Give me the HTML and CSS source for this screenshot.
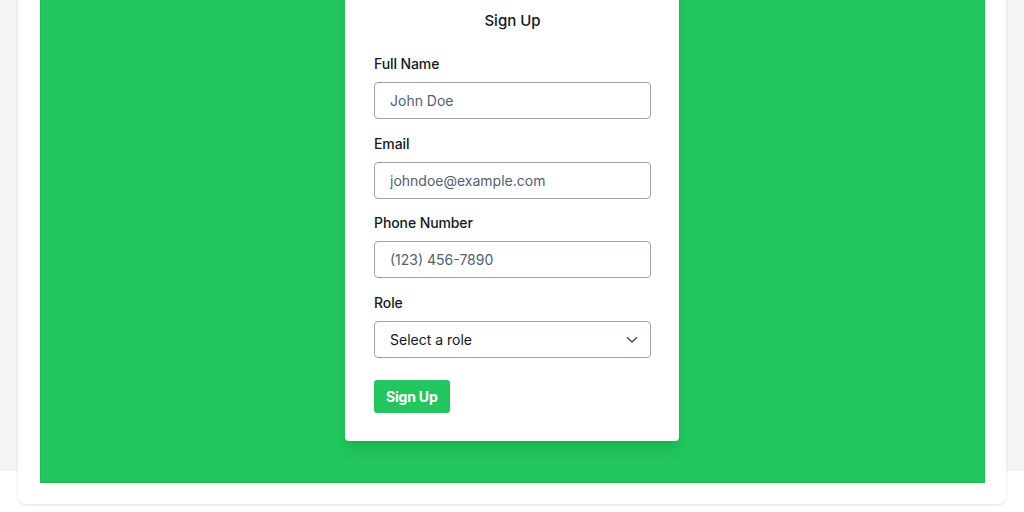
FILE: index.html
```html
<!DOCTYPE html>
<html lang="en">
<head>
  <meta charset="UTF-8" />
  <title>Sign Up</title>
  <link rel="stylesheet" href="styles.css">
</head>
<body>
  <div class="page">
    <div class="frame">
      <div class="hero">
        <form class="signup">
          <h2>Sign Up</h2>
          <div class="field">
            <label for="fullName">Full Name</label>
            <input type="text" id="fullName" placeholder="John Doe" />
          </div>
          <div class="field">
            <label for="email">Email</label>
            <input type="email" id="email" placeholder="johndoe@example.com" />
          </div>
          <div class="field">
            <label for="phone">Phone Number</label>
            <input type="tel" id="phone" placeholder="(123) 456-7890" />
          </div>
          <div class="field">
            <label for="role">Role</label>
            <div class="select-wrap">
              <select id="role">
                <option>Select a role</option>
                <option>Admin</option>
                <option>User</option>
              </select>
              <svg class="chevron" width="12" height="8" viewBox="0 0 12 8">
                <path d="M1.5 1.8 L6 6 L10.5 1.8" fill="none" stroke="#374151" stroke-width="1.3" stroke-linecap="round" stroke-linejoin="round"/>
              </svg>
            </div>
          </div>
          <button type="button">Sign Up</button>
        </form>
      </div>
    </div>
  </div>
</body>
</html>
```

FILE: styles.css
```css
body {
  margin: 0;
  font-family: Inter, "Noto Sans", sans-serif;
  background: #fff;
  color: #111827;
}
.page {
  background: linear-gradient(#f3f4f6 471px, #fff 471px);
  padding: 0 18px 8px;
  overflow: hidden;
}
.frame {
  margin-top: -83px;
  background: white;
  border-radius: 8px;
  box-shadow: 0 1px 3px rgba(0, 0, 0, 0.12);
  padding: 0 21px 21px 22px;
}
.hero {
  background: #22c55e;
  border: 1px solid #16bf4f;
  padding: 47px 1px 41px 0;
  display: flex;
  justify-content: center;
}
.signup {
  background: white;
  width: 334px;
  box-sizing: border-box;
  padding: 44px 28px 28px 29px;
  border-radius: 4px;
  box-shadow: 0 10px 15px -3px rgba(0, 0, 0, 0.1), 0 4px 6px -4px rgba(0, 0, 0, 0.1);
}
h2 {
  margin: 0 0 21px;
  font-size: 15px;
  line-height: 24px;
  font-weight: 500;
  text-align: center;
}
.field {
  margin-bottom: 14.5px;
}
label {
  display: block;
  font-size: 14px;
  line-height: 20px;
  font-weight: 500;
  letter-spacing: -0.1px;
  margin-bottom: 8px;
}
input, select {
  display: block;
  width: 100%;
  height: 37px;
  box-sizing: border-box;
  padding: 0 15px;
  border: 1px solid #9ca3af;
  border-radius: 4px;
  font-family: inherit;
  font-size: 14px;
  color: #111827;
  background: white;
}
input::placeholder {
  color: #525f73;
}
.select-wrap {
  position: relative;
}
select {
  appearance: none;
  -webkit-appearance: none;
}
.chevron {
  position: absolute;
  right: 13px;
  top: 15px;
  pointer-events: none;
}
button {
  margin-top: 8px;
  height: 33px;
  padding: 0 12px;
  border: none;
  background-color: #22c55e;
  color: white;
  font-family: inherit;
  font-size: 14px;
  font-weight: 700;
  letter-spacing: -0.2px;
  border-radius: 3px;
  cursor: pointer;
}
```
